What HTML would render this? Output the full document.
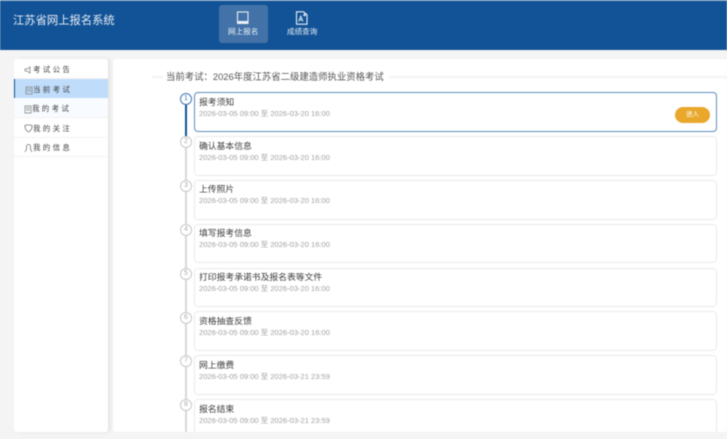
<!DOCTYPE html>
<html lang="zh"><head><meta charset="utf-8"><style>
html,body{margin:0;padding:0;width:727px;height:439px;overflow:hidden;background:#f4f4f4}
body{font-family:"Liberation Sans","Noto Sans CJK SC",sans-serif;position:relative;filter:blur(.4px)}
div,span,svg{position:absolute;box-sizing:border-box}
.t{white-space:nowrap;line-height:1}
.hdr{left:0;top:0;width:727px;height:50px;background:#125397;border-top:1px solid #7d9cbf}
.sel{left:219px;top:5px;width:49px;height:38px;background:#4272a8;border-radius:3px}
.side{left:14px;top:59px;width:94px;height:373px;background:#fff;border-radius:3px;box-shadow:2px 0 3px #e4e4e4}
.main{left:113px;top:59px;width:614px;height:373px;background:#fff;border-radius:3px 0 0 3px}
.card{left:194px;width:523px;height:39.500px;background:#fff;border:1px solid #ebebeb;border-radius:4px}
.cn{left:199px;font-size:8.800px;color:#3c3c3c}
.dt{left:199px;font-size:7.550px;color:#a2a2a2}
.c{left:180px;width:12px;height:12px;border:1px solid #c8c8c8;border-radius:50%;background:#fff;color:#aaa;font-size:7px;line-height:10px;text-align:center}
.m{font-size:7.500px;color:#444;letter-spacing:2.300px}
</style></head><body>
<div class="hdr"></div>
<div class="t" style="left:13px;top:15.500px;font-size:11.300px;color:#e6edf5">江苏省网上报名系统</div>
<div class="sel"></div>
<svg style="left:236px;top:11px" width="14" height="14" viewBox="0 0 14 14" fill="none"><rect x="1.500" y="1" width="10.500" height="9.500" fill="none" stroke="#e8eef5" stroke-width="1.100"/><path d="M1 11h11.500v2H1z" fill="#e8eef5"/></svg>
<div class="t" style="left:228px;top:28px;font-size:7.600px;color:#eef3f8">网上报名</div>
<svg style="left:295px;top:11px" width="14" height="14" viewBox="0 0 14 14" fill="none"><path d="M1.500.8h7l3.500 3v9.400H1.500z" stroke="#e8eef5" stroke-width="1.100"/><path d="M3.700 10.500 5.800 5.200 7.900 10.500M4.500 8.800h2.700" stroke="#e8eef5"/><path d="M9.500 2.500v3M8 4h3" stroke="#e8eef5"/></svg>
<div class="t" style="left:287px;top:28px;font-size:7.600px;color:#e6edf5">成绩查询</div>

<div class="side"></div>
<div style="left:14px;top:59px;width:94px;height:20px;border-bottom:1px solid #f3f3f3"></div>
<div class="t m" style="left:33px;top:65.500px">考试公告</div>
<svg style="left:24px;top:66px" width="8" height="8" viewBox="0 0 8 8" fill="none"><path d="M1 3h2l3-2v6L3 5H1z" stroke="#888" stroke-width=".8"/></svg>
<div style="left:14px;top:79px;width:94px;height:19px;background:#bfdcfa;border-left:1px solid #125397"></div>
<div class="t m" style="left:33px;top:85.500px">当前考试</div>
<svg style="left:25px;top:86px" width="8" height="9" viewBox="0 0 8 9" fill="none"><path d="M1 1h6v7H1zM2 3h4M2 5h4" stroke="#888" stroke-width=".8"/></svg>
<div style="left:14px;top:98px;width:94px;height:20px;background:#f8fbff;border-bottom:1px solid #f3f3f3"></div>
<div class="t m" style="left:32px;top:104.500px">我的考试</div>
<svg style="left:24px;top:105px" width="8" height="9" viewBox="0 0 8 9" fill="none"><path d="M1 1h6v7H1zM2 3h4M2 5h4" stroke="#999" stroke-width=".9"/></svg>
<div style="left:14px;top:118px;width:94px;height:20px;border-bottom:1px solid #f3f3f3"></div>
<div class="t m" style="left:33px;top:124.500px">我的关注</div>
<svg style="left:24px;top:124px" width="9" height="9" viewBox="0 0 9 9" fill="none"><path d="M1 1.500Q4.500 .2 8 1.500 8.300 6 4.500 8 .700 6 1 1.500z" stroke="#777" stroke-width=".8"/></svg>
<div style="left:14px;top:138px;width:94px;height:19px;border-bottom:1px solid #f3f3f3"></div>
<div class="t m" style="left:33px;top:143.500px">我的信息</div>
<svg style="left:24px;top:144px" width="9" height="9" viewBox="0 0 9 9" fill="none"><path d="M1 8 2.500 5V2.500a2 2 0 0 1 4 0V5L8 8" stroke="#777" stroke-width=".8"/></svg>

<div class="main"></div>
<div style="left:152px;top:76px;width:11px;height:2px;background:#f3f3f3"></div>
<div style="left:389px;top:76px;width:338px;height:2px;background:#f3f3f3"></div>
<div class="t" style="left:166px;top:72px;font-size:9.400px;color:#555">当前考试：2026年度江苏省二级建造师执业资格考试</div>

<div style="left:185px;top:104px;width:2px;height:328px;background:#d8d8d8"></div>
<div style="left:185px;top:104px;width:2px;height:32px;background:#125397"></div>

<div class="card" style="top:92px;border-color:#5d8cc0"></div>
<div class="card" style="top:136px"></div>
<div class="card" style="top:180px"></div>
<div class="card" style="top:223.500px"></div>
<div class="card" style="top:267.500px"></div>
<div class="card" style="top:311px"></div>
<div class="card" style="top:355px"></div>
<div class="card" style="top:399px;height:33px;border-bottom:0;border-radius:4px 4px 0 0"></div>

<div class="c" style="top:93px;border-color:#3f78b5;color:#3f78b5">1</div>
<div class="c" style="top:136px">2</div>
<div class="c" style="top:180px">3</div>
<div class="c" style="top:224px">4</div>
<div class="c" style="top:268px">5</div>
<div class="c" style="top:312px">6</div>
<div class="c" style="top:355px">7</div>
<div class="c" style="top:399px">8</div>

<div class="t cn" style="top:97.500px">报考须知</div><div class="t dt" style="top:110px">2026-03-05 09:00 至 2026-03-20 16:00</div>
<div class="t cn" style="top:141.500px">确认基本信息</div><div class="t dt" style="top:154px">2026-03-05 09:00 至 2026-03-20 16:00</div>
<div class="t cn" style="top:184.500px">上传照片</div><div class="t dt" style="top:197px">2026-03-05 09:00 至 2026-03-20 16:00</div>
<div class="t cn" style="top:228.500px">填写报考信息</div><div class="t dt" style="top:241px">2026-03-05 09:00 至 2026-03-20 16:00</div>
<div class="t cn" style="top:272.500px">打印报考承诺书及报名表等文件</div><div class="t dt" style="top:285px">2026-03-05 09:00 至 2026-03-20 16:00</div>
<div class="t cn" style="top:316.500px">资格抽查反馈</div><div class="t dt" style="top:329px">2026-03-05 09:00 至 2026-03-20 16:00</div>
<div class="t cn" style="top:360.500px">网上缴费</div><div class="t dt" style="top:373px">2026-03-05 09:00 至 2026-03-21 23:59</div>
<div class="t cn" style="top:404.500px">报名结束</div><div class="t dt" style="top:417px">2026-03-05 09:00 至 2026-03-21 23:59</div>

<div style="left:675px;top:107px;width:35px;height:16px;border-radius:8px;background:#e9a82c"></div>
<div class="t" style="left:686px;top:112px;font-size:6.500px;color:#fff">进入</div>
</body></html>
